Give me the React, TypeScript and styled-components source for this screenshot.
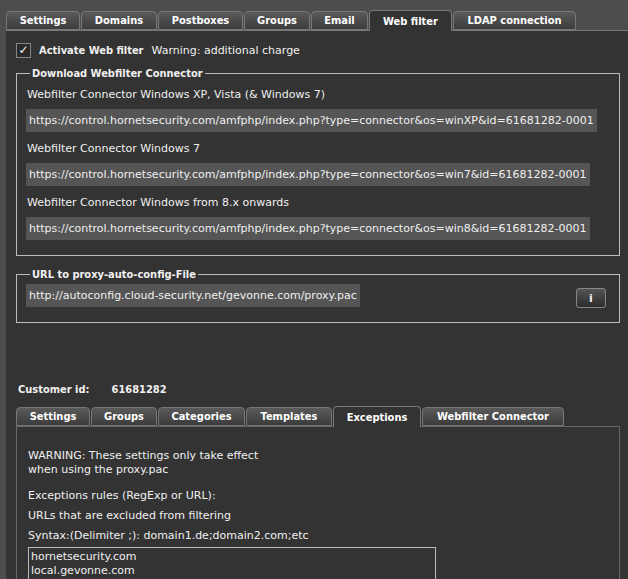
import React from 'react';
import styled, { createGlobalStyle } from 'styled-components';

const Global = createGlobalStyle`
  html, body { margin: 0; padding: 0; background: #4d4d4d; }
  body { font-family: 'DejaVu Sans', 'Liberation Sans', sans-serif; font-size: 11px; color: #f0f0f0; }
`;

const Page = styled.div`
  width: 628px;
  height: 579px;
  overflow: hidden;
  background: #4d4d4d;
  padding: 10px 0 0 6px;
  box-sizing: border-box;
`;

const TabBar = styled.div`
  display: flex;
  align-items: flex-end;
  height: 20px;
`;

const Tab = styled.div<{ $w: number; $active?: boolean }>`
  width: ${(p) => p.$w}px;
  height: ${(p) => (p.$active ? 21 : 19)}px;
  margin-bottom: ${(p) => (p.$active ? -1 : 0)}px;
  box-sizing: border-box;
  display: flex;
  align-items: center;
  justify-content: center;
  font-family: 'DejaVu Sans Condensed', sans-serif;
  font-weight: bold;
  font-size: 11px;
  color: #fff;
  border: 1px solid #777;
  border-bottom: ${(p) => (p.$active ? 'none' : '1px solid #777')};
  border-radius: 4px 4px 0 0;
  margin-right: 1px;
  background: ${(p) => (p.$active ? '#333' : 'linear-gradient(#5a5a5a, #3c3c3c)')};
  position: relative;
  z-index: 1;
`;

const Content = styled.div`
  background: #333;
  border-top: 1px solid #777;
  padding: 10px 8px 0 10px;
  height: 549px;
  box-sizing: border-box;
`;

const CheckRow = styled.div`
  display: flex;
  align-items: center;
  gap: 8px;
  height: 18px;
  margin-bottom: 8px;
`;

const Check = styled.div`
  width: 13px;
  height: 13px;
  border: 1px solid #888;
  background: #2a2a2a;
  display: flex;
  align-items: center;
  justify-content: center;
  font-size: 12px;
  font-weight: bold;
  color: #fff;
`;

const Bold = styled.span`
  font-family: 'DejaVu Sans Condensed', sans-serif;
  font-weight: bold;
`;

const Fieldset = styled.fieldset`
  border: 1px solid #bbb;
  margin: 0 0 12px 0;
  padding: 3px 9px 10px 9px;
`;

const Legend = styled.legend`
  font-family: 'DejaVu Sans Condensed', sans-serif;
  font-weight: bold;
  padding: 0 2px;
  margin-left: 4px;
`;

const Line = styled.div`
  height: 14px;
  margin: 5px 0 7px 1px;
`;

const UrlBox = styled.div`
  display: inline-block;
  background: #555;
  padding: 5px 3px;
  margin-bottom: 5px;
`;

const Row = styled.div`
  display: flex;
  justify-content: space-between;
  align-items: center;
`;

const InfoBtn = styled.div`
  width: 28px;
  height: 18px;
  border: 1px solid #888;
  border-radius: 3px;
  background: linear-gradient(#555, #2c2c2c);
  display: flex;
  align-items: center;
  justify-content: center;
  font-weight: bold;
  margin-right: 4px;
`;

const Customer = styled.div`
  margin: 60px 0 10px 2px;
  font-family: 'DejaVu Sans Condensed', sans-serif;
  font-weight: bold;
  display: flex;
  gap: 22px;
`;

const Panel = styled.div`
  border: 1px solid #666;
  padding: 22px 10px 0 11px;
  height: 200px;
`;

const P = styled.div<{ $gap?: number }>`
  line-height: 14px;
  margin-bottom: ${(p) => p.$gap ?? 6}px;
`;

const TextArea = styled.div`
  width: 408px;
  height: 60px;
  border: 1px solid #bbb;
  padding: 2px 2px;
  line-height: 14px;
  box-sizing: border-box;
`;

const mainTabs: [string, number, boolean?][] = [
  ['Settings', 74], ['Domains', 76], ['Postboxes', 85], ['Groups', 66],
  ['Email', 57], ['Web filter', 83, true], ['LDAP connection', 123],
];
const subTabs: [string, number, boolean?][] = [
  ['Settings', 74], ['Groups', 66], ['Categories', 87], ['Templates', 86],
  ['Exceptions', 88, true], ['Webfilter Connector', 142],
];

const connectors = [
  ['Webfilter Connector Windows XP, Vista (& Windows 7)', 'winXP'],
  ['Webfilter Connector Windows 7', 'win7'],
  ['Webfilter Connector Windows from 8.x onwards', 'win8'],
];

export default function App() {
  return (
    <Page>
      <Global />
      <TabBar>
        {mainTabs.map(([t, w, a]) => <Tab key={t} $w={w} $active={a}>{t}</Tab>)}
      </TabBar>
      <Content>
        <CheckRow>
          <Check>✓</Check>
          <Bold>Activate Web filter</Bold>
          <span>Warning: additional charge</span>
        </CheckRow>
        <Fieldset>
          <Legend>Download Webfilter Connector</Legend>
          {connectors.map(([label, os]) => (
            <div key={os}>
              <Line>{label}</Line>
              <UrlBox>https://control.hornetsecurity.com/amfphp/index.php?type=connector&amp;os={os}&amp;id=61681282-0001</UrlBox>
            </div>
          ))}
        </Fieldset>
        <Fieldset>
          <Legend>URL to proxy-auto-config-File</Legend>
          <Row>
            <UrlBox>http://autoconfig.cloud-security.net/gevonne.com/proxy.pac</UrlBox>
            <InfoBtn>i</InfoBtn>
          </Row>
        </Fieldset>
        <Customer><span>Customer id:</span><span>61681282</span></Customer>
        <TabBar>
          {subTabs.map(([t, w, a]) => <Tab key={t} $w={w} $active={a}>{t}</Tab>)}
        </TabBar>
        <Panel>
          <P $gap={12}>WARNING: These settings only take effect<br />when using the proxy.pac</P>
          <P $gap={6}>Exceptions rules (RegExp or URL):</P>
          <P $gap={6}>URLs that are excluded from filtering</P>
          <P $gap={4}>Syntax:(Delimiter ;): domain1.de;domain2.com;etc</P>
          <TextArea>hornetsecurity.com<br />local.gevonne.com<br />hornetsecurity.de</TextArea>
        </Panel>
      </Content>
    </Page>
  );
}
